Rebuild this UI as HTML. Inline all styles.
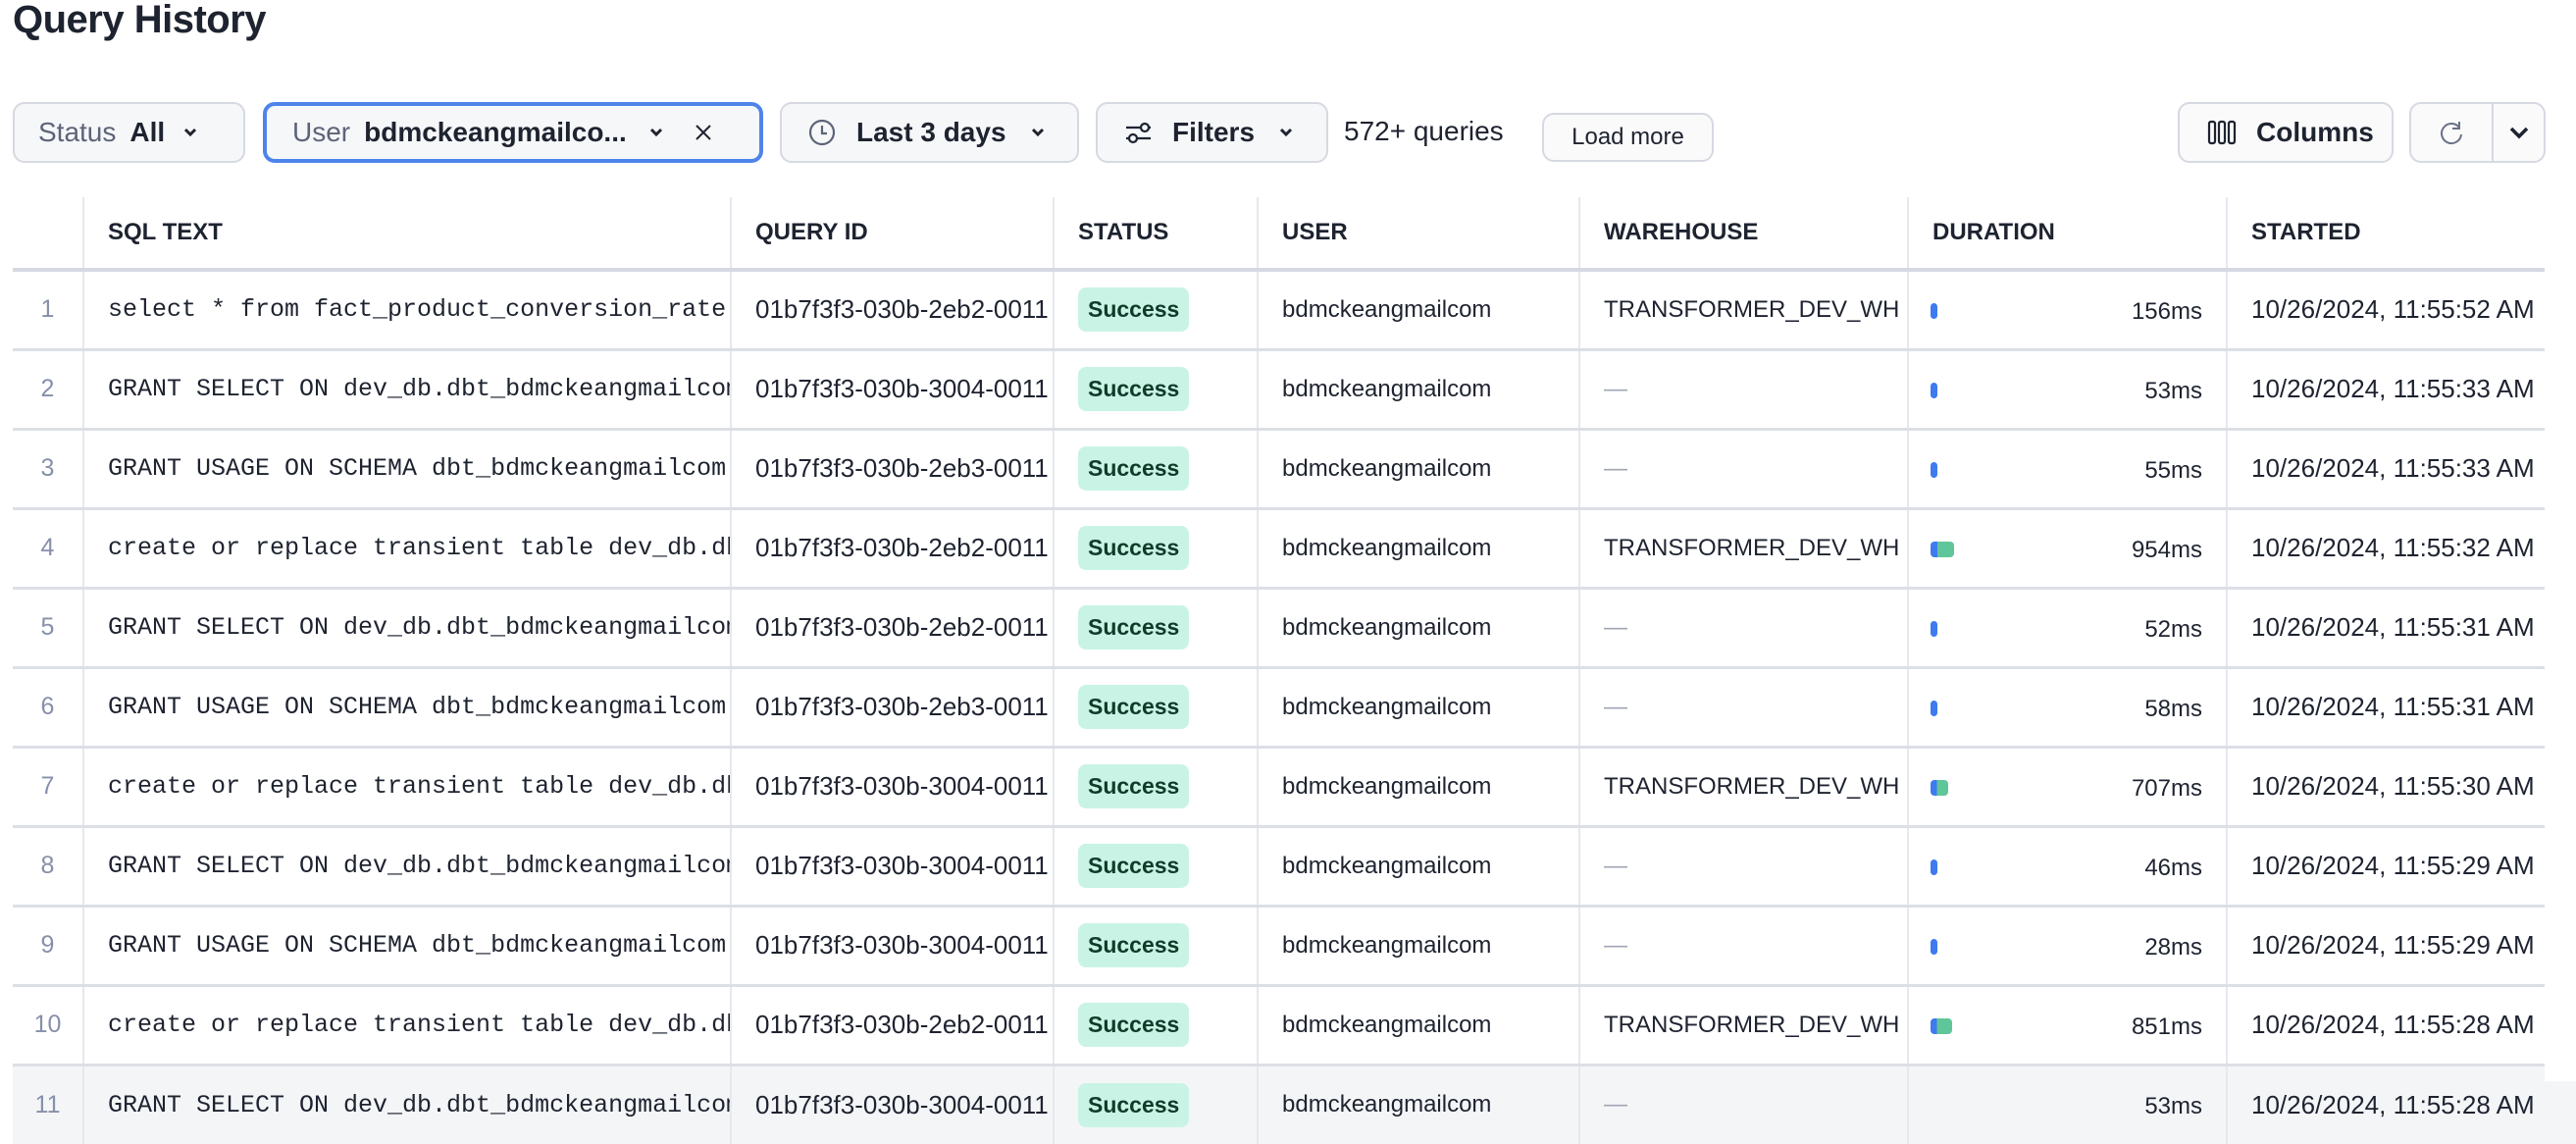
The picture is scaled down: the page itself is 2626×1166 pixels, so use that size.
<!DOCTYPE html>
<html><head><meta charset="utf-8"><style>
*{box-sizing:border-box;margin:0;padding:0}
body{width:2626px;height:1102px;overflow:hidden;background:#fff;font-family:"Liberation Sans",sans-serif;color:#1e2330;position:relative}
h1{position:absolute;left:13px;top:-2px;font-size:40px;font-weight:700;letter-spacing:-0.5px}
.btn{position:absolute;top:104px;height:62px;border:2px solid #d6d9e1;border-radius:12px;background:#f6f7f9;display:flex;align-items:center;font-size:28px;white-space:nowrap}
.lbl{color:#5d6478;margin-right:14px}
.b{font-weight:700}
.chev{margin-left:18px}
table{position:absolute;left:13px;top:201px;border-collapse:collapse;table-layout:fixed;width:2640px}
td,th{border-left:2px solid #e6e8ee;white-space:nowrap;overflow:hidden;padding-left:24px;font-size:24px;text-align:left;height:81px}
td:first-child,th:first-child{border-left:none;padding:0;text-align:center;color:#8790aa;font-size:25px}
th{height:74px;font-weight:700;font-size:24px;border-bottom:4px solid #d6d9e1}
tr.r td{border-bottom:3px solid #dcdfe6}
.mono{font-family:"Liberation Mono",monospace;font-size:25px}
.qid,.dt{font-size:26px}
.badge{display:inline-block;background:#c9f4e5;color:#0f3b2a;font-weight:700;font-size:23px;border-radius:8px;padding:9px 10px}
.dash{color:#a0a6b6}
.dur{position:relative}
.bar{position:absolute;left:22px;top:32px;height:16px;border-radius:4px;background:#3e7af0}
.num{position:absolute;right:24px;top:27px}
.clip{position:absolute;left:2594px;top:190px;width:40px;height:912px;background:#fff;z-index:5}
</style></head><body>
<h1>Query History</h1>
<div class="btn" style="left:13px;width:237px;padding-left:24px"><span class="lbl">Status</span><span class="b">All</span><svg class="chev" width="16" height="12" viewBox="0 0 16 12"><path d="M3 3l5 5 5-5" stroke="#1e2330" stroke-width="3" fill="none"/></svg></div>
<div class="btn" style="left:268px;width:510px;padding-left:26px;border:4px solid #4e84ea"><span class="lbl">User</span><span class="b">bdmckeangmailco...</span><svg style="margin-left:22px" width="16" height="12" viewBox="0 0 16 12"><path d="M3 3l5 5 5-5" stroke="#1e2330" stroke-width="3" fill="none"/></svg><svg style="margin-left:30px" width="20" height="20" viewBox="0 0 20 20"><path d="M3 3l14 14M17 3L3 17" stroke="#1e2330" stroke-width="2" fill="none"/></svg></div>
<div class="btn" style="left:795px;width:305px;padding-left:26px"><svg width="30" height="30" viewBox="0 0 30 30" style="margin-right:20px"><circle cx="15" cy="15" r="12" stroke="#5d6478" stroke-width="2.2" fill="none"/><path d="M15 8v8h5" stroke="#5d6478" stroke-width="2.2" fill="none"/></svg><span class="b">Last 3 days</span><svg class="chev" style="margin-left:24px" width="16" height="12" viewBox="0 0 16 12"><path d="M3 3l5 5 5-5" stroke="#1e2330" stroke-width="3" fill="none"/></svg></div>
<div class="btn" style="left:1117px;width:237px;padding-left:26px"><svg width="30" height="30" viewBox="0 0 30 30" style="margin-right:20px"><path d="M3 10h15M26 10h2M3 21h3M14 21h14" stroke="#1e2330" stroke-width="2.2"/><circle cx="22" cy="10" r="4" stroke="#1e2330" stroke-width="2.2" fill="none"/><circle cx="10" cy="21" r="4" stroke="#1e2330" stroke-width="2.2" fill="none"/></svg><span class="b">Filters</span><svg class="chev" style="margin-left:24px" width="16" height="12" viewBox="0 0 16 12"><path d="M3 3l5 5 5-5" stroke="#1e2330" stroke-width="3" fill="none"/></svg></div>
<div style="position:absolute;left:1370px;top:118px;font-size:28px">572+ queries</div>
<div class="btn" style="left:1572px;top:115px;height:50px;width:175px;justify-content:center;font-size:24px;background:#fafafb">Load more</div>
<div class="btn" style="left:2220px;width:220px;padding-left:28px;background:#fafafb"><svg width="30" height="26" viewBox="0 0 30 26" style="margin-right:20px"><rect x="2" y="2" width="6" height="22" rx="2" stroke="#1e2330" stroke-width="2.2" fill="none"/><rect x="12" y="2" width="6" height="22" rx="2" stroke="#1e2330" stroke-width="2.2" fill="none"/><rect x="22" y="2" width="6" height="22" rx="2" stroke="#1e2330" stroke-width="2.2" fill="none"/></svg><span class="b" style="font-weight:600">Columns</span></div>
<div class="btn" style="left:2456px;width:139px;background:#fafafb"><div style="width:84px;height:100%;border-right:2px solid #d6d9e1;display:flex;align-items:center;justify-content:center"><svg width="28" height="28" viewBox="0 0 28 28"><path d="M22 9A10 10 0 1 0 24 16" stroke="#6a7186" stroke-width="2" fill="none"/><path d="M22 3v7h-7" stroke="#6a7186" stroke-width="2" fill="none"/></svg></div><div style="flex:1;display:flex;justify-content:center"><svg width="22" height="16" viewBox="0 0 22 16"><path d="M3 4l8 8 8-8" stroke="#1e2330" stroke-width="3.5" fill="none"/></svg></div></div>
<table>
<colgroup><col style="width:72px"><col style="width:660px"><col style="width:329px"><col style="width:208px"><col style="width:328px"><col style="width:335px"><col style="width:325px"><col style="width:383px"></colgroup>
<tr><th></th><th>SQL TEXT</th><th>QUERY ID</th><th>STATUS</th><th>USER</th><th>WAREHOUSE</th><th>DURATION</th><th>STARTED</th></tr>
<tr class="r"><td>1</td><td class="mono">select * from fact_product_conversion_rate</td><td class="qid">01b7f3f3-030b-2eb2-0011</td><td><span class="badge">Success</span></td><td>bdmckeangmailcom</td><td>TRANSFORMER_DEV_WH</td><td class="dur"><span class="bar" style="width:7px"></span><span class="num">156ms</span></td><td class="dt">10/26/2024, 11:55:52 AM</td></tr>
<tr class="r"><td>2</td><td class="mono">GRANT SELECT ON dev_db.dbt_bdmckeangmailcom</td><td class="qid">01b7f3f3-030b-3004-0011</td><td><span class="badge">Success</span></td><td>bdmckeangmailcom</td><td class="dash">—</td><td class="dur"><span class="bar" style="width:7px"></span><span class="num">53ms</span></td><td class="dt">10/26/2024, 11:55:33 AM</td></tr>
<tr class="r"><td>3</td><td class="mono">GRANT USAGE ON SCHEMA dbt_bdmckeangmailcom</td><td class="qid">01b7f3f3-030b-2eb3-0011</td><td><span class="badge">Success</span></td><td>bdmckeangmailcom</td><td class="dash">—</td><td class="dur"><span class="bar" style="width:7px"></span><span class="num">55ms</span></td><td class="dt">10/26/2024, 11:55:33 AM</td></tr>
<tr class="r"><td>4</td><td class="mono">create or replace transient table dev_db.dbt</td><td class="qid">01b7f3f3-030b-2eb2-0011</td><td><span class="badge">Success</span></td><td>bdmckeangmailcom</td><td>TRANSFORMER_DEV_WH</td><td class="dur"><span class="bar" style="width:24px;background:linear-gradient(90deg,#3e7af0 30%,#5fc69a 30%)"></span><span class="num">954ms</span></td><td class="dt">10/26/2024, 11:55:32 AM</td></tr>
<tr class="r"><td>5</td><td class="mono">GRANT SELECT ON dev_db.dbt_bdmckeangmailcom</td><td class="qid">01b7f3f3-030b-2eb2-0011</td><td><span class="badge">Success</span></td><td>bdmckeangmailcom</td><td class="dash">—</td><td class="dur"><span class="bar" style="width:7px"></span><span class="num">52ms</span></td><td class="dt">10/26/2024, 11:55:31 AM</td></tr>
<tr class="r"><td>6</td><td class="mono">GRANT USAGE ON SCHEMA dbt_bdmckeangmailcom</td><td class="qid">01b7f3f3-030b-2eb3-0011</td><td><span class="badge">Success</span></td><td>bdmckeangmailcom</td><td class="dash">—</td><td class="dur"><span class="bar" style="width:7px"></span><span class="num">58ms</span></td><td class="dt">10/26/2024, 11:55:31 AM</td></tr>
<tr class="r"><td>7</td><td class="mono">create or replace transient table dev_db.dbt</td><td class="qid">01b7f3f3-030b-3004-0011</td><td><span class="badge">Success</span></td><td>bdmckeangmailcom</td><td>TRANSFORMER_DEV_WH</td><td class="dur"><span class="bar" style="width:18px;background:linear-gradient(90deg,#3e7af0 35%,#5fc69a 35%)"></span><span class="num">707ms</span></td><td class="dt">10/26/2024, 11:55:30 AM</td></tr>
<tr class="r"><td>8</td><td class="mono">GRANT SELECT ON dev_db.dbt_bdmckeangmailcom</td><td class="qid">01b7f3f3-030b-3004-0011</td><td><span class="badge">Success</span></td><td>bdmckeangmailcom</td><td class="dash">—</td><td class="dur"><span class="bar" style="width:7px"></span><span class="num">46ms</span></td><td class="dt">10/26/2024, 11:55:29 AM</td></tr>
<tr class="r"><td>9</td><td class="mono">GRANT USAGE ON SCHEMA dbt_bdmckeangmailcom</td><td class="qid">01b7f3f3-030b-3004-0011</td><td><span class="badge">Success</span></td><td>bdmckeangmailcom</td><td class="dash">—</td><td class="dur"><span class="bar" style="width:7px"></span><span class="num">28ms</span></td><td class="dt">10/26/2024, 11:55:29 AM</td></tr>
<tr class="r"><td>10</td><td class="mono">create or replace transient table dev_db.dbt</td><td class="qid">01b7f3f3-030b-2eb2-0011</td><td><span class="badge">Success</span></td><td>bdmckeangmailcom</td><td>TRANSFORMER_DEV_WH</td><td class="dur"><span class="bar" style="width:22px;background:linear-gradient(90deg,#3e7af0 30%,#5fc69a 30%)"></span><span class="num">851ms</span></td><td class="dt">10/26/2024, 11:55:28 AM</td></tr>
<tr style="background:#f4f5f7"><td>11</td><td class="mono">GRANT SELECT ON dev_db.dbt_bdmckeangmailcom</td><td class="qid">01b7f3f3-030b-3004-0011</td><td><span class="badge">Success</span></td><td>bdmckeangmailcom</td><td class="dash">—</td><td class="dur"><span class="num">53ms</span></td><td class="dt">10/26/2024, 11:55:28 AM</td></tr>
</table>
<div class="clip"></div>
</body></html>
